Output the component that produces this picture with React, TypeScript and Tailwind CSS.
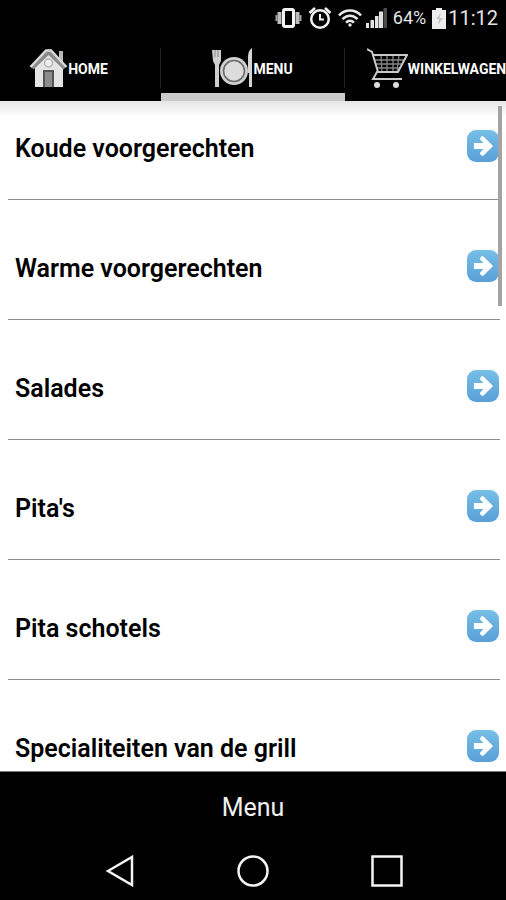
import React from "react";

const categories = [
  "Koude voorgerechten",
  "Warme voorgerechten",
  "Salades",
  "Pita's",
  "Pita schotels",
  "Specialiteiten van de grill",
];

function VibrateIcon() {
  return (
    <svg width="27" height="22" viewBox="0 0 27 22" aria-hidden="true">
      <rect x="8.500" y="2.500" width="10" height="17" rx="1.500" fill="none" stroke="#f4f4f4" strokeWidth="3" />
      <path d="M4.500 5v12M22.500 5v12" stroke="#bdbdbd" strokeWidth="4" />
      <path d="M1.500 8v6M25.500 8v6" stroke="#a5a5a5" strokeWidth="2" />
    </svg>
  );
}

function AlarmIcon() {
  return (
    <svg width="24" height="24" viewBox="0 0 24 24" fill="none" stroke="#f2f2f2" aria-hidden="true">
      <circle cx="12" cy="13" r="8.800" strokeWidth="2.500" />
      <path d="M12 8v5.500h4" strokeWidth="2" />
      <path d="M1.500 7l5.500-5M22.500 7l-5.500-5" strokeWidth="2.600" />
    </svg>
  );
}

function WifiIcon() {
  return (
    <svg width="24" height="20" viewBox="0 0 24 20" fill="none" stroke="#e8e8e8" strokeWidth="2.600" aria-hidden="true">
      <path d="M1 7.500C7 .8 17 .8 23 7.500" />
      <path d="M4.500 11.200c4.300-4.600 10.700-4.600 15 0" />
      <path d="M8 14.600c2.300-2.300 5.700-2.300 8 0" />
      <circle cx="12" cy="17" r="1.700" fill="#e8e8e8" stroke="none" />
    </svg>
  );
}

function SignalIcon() {
  return (
    <svg width="21" height="20" viewBox="0 0 21 20" aria-hidden="true">
      <path d="M0 15h3v5H0zM4.500 12h3.500v8H4.500zM9 8h3.500v12H9zM13 3.500h4V20h-4z" fill="#e2e2e2" />
      <path d="M17.500 0H21v20h-3.500z" fill="#4b4b4b" />
    </svg>
  );
}

function BatteryIcon() {
  return (
    <svg width="14" height="21" viewBox="0 0 14 21" aria-hidden="true">
      <path d="M4 0h6v2h4v19H0V2h4z" fill="#ededed" />
      <path d="M9 5l-5 6h3l-1 6 5-7H7.500z" fill="#c4c4c4" />
    </svg>
  );
}

function HouseIcon() {
  return (
    <svg width="39" height="40" viewBox="0 0 39 40" className="shrink-0" aria-hidden="true">
      <path d="M30 3h4v13l-4-4z" fill="#b8b8b8" />
      <path d="M6 18L19.500 5 34 19v20H6z" fill="#e4e4e4" />
      <path d="M3 20L19.500 4 36 20" fill="none" stroke="#8a8a8a" strokeWidth="4.500" />
      <path d="M1.500 19L17 2.500h5L37.500 19" fill="none" stroke="#d9d9d9" strokeWidth="2.500" />
      <circle cx="19.500" cy="15" r="4" fill="#eee" stroke="#b2b2b2" strokeWidth="1.500" />
      <path d="M14 22h11v17H14z" fill="#555" />
      <path d="M16 24h7v15h-7z" fill="#8c8c8c" />
    </svg>
  );
}

function PlateIcon() {
  return (
    <svg width="41" height="40" viewBox="0 0 41 40" className="shrink-0" aria-hidden="true">
      <path d="M0 2h9v11l-2 4v22H3V17l-2-4z" fill="#cfcfcf" />
      <path d="M3 2v7M6 2v7" stroke="#8a8a8a" strokeWidth="1" />
      <circle cx="22" cy="23" r="14" fill="#d0d0d0" />
      <circle cx="22" cy="23" r="10.500" fill="#dcdcdc" stroke="#6c6c6c" strokeWidth="1.600" />
      <path d="M40 0v39h-3V25h-1V9c0-4 1-7 4-9z" fill="#d5d5d5" />
    </svg>
  );
}

function CartIcon() {
  return (
    <svg width="41" height="40" viewBox="0 0 41 40" className="shrink-0" fill="none" aria-hidden="true">
      <path d="M8 12h30M8 16h28M9 20h25M14 7l1 17M20 7v17M26 7v17M32 7l-2 17" stroke="#858585" strokeWidth="1.300" />
      <path d="M0 1l5 3 6 20M6 7h34l-9 17H10l-4 7h29" stroke="#c9c9c9" strokeWidth="2" />
      <circle cx="10" cy="37" r="3" fill="#ddd" />
      <circle cx="29" cy="37" r="3" fill="#ddd" />
    </svg>
  );
}

function ArrowBadge() {
  return (
    <svg width="32" height="32" viewBox="0 0 32 32" className="shrink-0" aria-hidden="true">
      <defs>
        <linearGradient id="badge" x1="0" y1="0" x2="0" y2="1">
          <stop offset="0" stopColor="#76bfe6" />
          <stop offset="1" stopColor="#5b9fd8" />
        </linearGradient>
      </defs>
      <rect width="32" height="32" rx="9" fill="url(#badge)" />
      <path d="M7 13h9.500l-3-3a2 2 0 0 1 0-2.500l1-1a1.500 1.500 0 0 1 2 0L26 16l-9.500 9.500a1.500 1.500 0 0 1-2 0l-1-1a2 2 0 0 1 0-2.500l3-3H7z" fill="#fff" />
    </svg>
  );
}

const tabs = [
  { label: "HOME", Icon: HouseIcon, active: false },
  { label: "MENU", Icon: PlateIcon, active: true },
  { label: "WINKELWAGEN", Icon: CartIcon, active: false },
];

export default function App() {
  return (
    <div className="flex h-screen flex-col overflow-hidden bg-white font-['Roboto',sans-serif] text-black">
      <header className="shrink-0 bg-black text-white">
        <div className="flex h-9 items-center justify-end gap-1.5 pr-2 text-[#e4e4e4]">
          <VibrateIcon />
          <AlarmIcon />
          <div className="flex items-center gap-1">
            <WifiIcon />
            <SignalIcon />
          </div>
          <span className="text-[18px] leading-6">64%</span>
          <div className="flex items-center gap-0.5">
            <BatteryIcon />
            <span className="text-[20px] leading-6">11:12</span>
          </div>
        </div>
        <nav className="flex h-[65px] justify-center overflow-hidden">
          {tabs.map(({ label, Icon, active }) => (
            <button
              key={label}
              type="button"
              aria-current={active ? "page" : undefined}
              className="flex w-[184px] shrink-0 flex-col"
            >
              <span className="mt-3 flex h-10 w-full items-center justify-center border-r border-[#242424] text-[14px] leading-5 font-bold">
                <Icon />
                <span className="pt-0.5">{label}</span>
              </span>
              {active && <span className="mt-auto h-2 w-full bg-[#cbcbcb]" />}
            </button>
          ))}
        </nav>
      </header>

      <main className="relative min-h-0 flex-1">
        <ul className="h-full overflow-y-auto bg-linear-to-b from-[#e6e6e6] to-white to-[16px] pr-1.5 pl-2 [scrollbar-width:none]">
          {categories.map((name) => (
            <li key={name} className="border-b border-[#8c8c8c] pt-[50px] first:pt-[29px]">
              <button type="button" className="flex w-full items-start justify-between pr-px pb-[35px] pl-[7px] text-left">
                <span className="pt-1 text-[25px] leading-[30px] font-semibold">{name}</span>
                <ArrowBadge />
              </button>
            </li>
          ))}
        </ul>
        <div className="absolute top-[5px] right-1 h-[200px] w-1 bg-[#a3a3a3]" />
      </main>

      <footer className="shrink-0 border-t border-[#777] bg-black text-[#f0f0f0]">
        <h1 className="pt-5 text-center text-[25px] leading-8">Menu</h1>
        <nav className="grid grid-cols-3 px-[52px] pt-[31px] pb-[13px]">
          <button type="button" aria-label="Terug" className="flex justify-center">
            <svg width="32" height="32" viewBox="0 0 32 32" fill="none" stroke="#f4f4f4" strokeWidth="2.500">
              <path d="M5 16L29 2v28z" />
            </svg>
          </button>
          <button type="button" aria-label="Startscherm" className="flex justify-center">
            <svg width="32" height="32" viewBox="0 0 32 32" fill="none" stroke="#f4f4f4" strokeWidth="2.500">
              <circle cx="16" cy="16" r="14.500" />
            </svg>
          </button>
          <button type="button" aria-label="Overzicht" className="flex justify-center">
            <svg width="32" height="32" viewBox="0 0 32 32" fill="none" stroke="#f4f4f4" strokeWidth="2.500">
              <rect x="1.500" y="1.500" width="29" height="29" />
            </svg>
          </button>
        </nav>
      </footer>
    </div>
  );
}
